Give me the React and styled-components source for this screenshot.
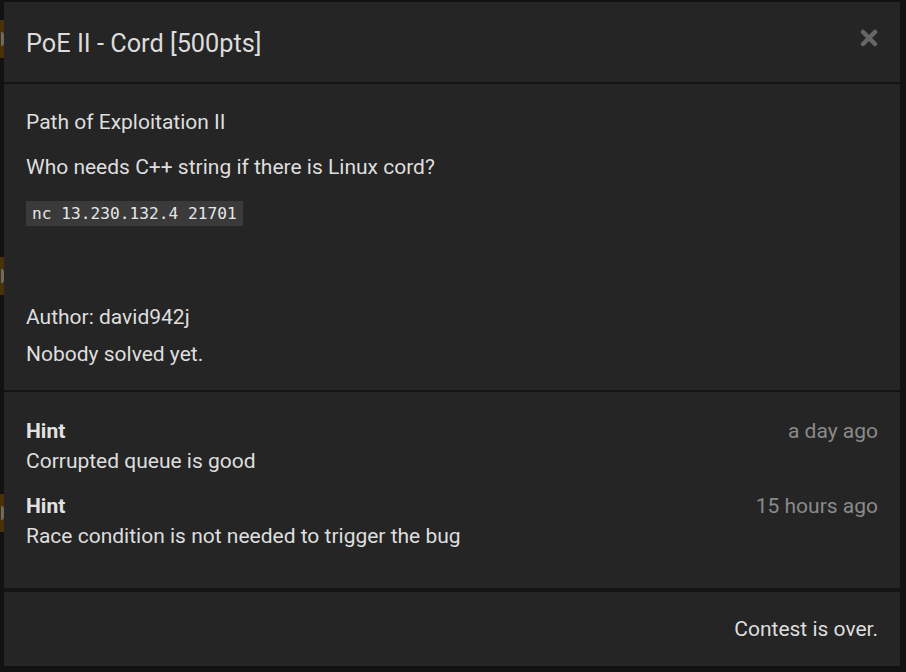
import React from "react";
import styled, { createGlobalStyle } from "styled-components";

const Global = createGlobalStyle`
  html, body { margin: 0; padding: 0; background: #121212; }
  body { font-family: Roboto, "Noto Sans", sans-serif; overflow: hidden; }
`;

const Page = styled.div`
  width: 906px;
  height: 672px;
  position: relative;
  overflow: hidden;
  background: #121212;
`;

const TileColumn = styled.div`
  display: flex;
  flex-direction: column;
  gap: 199px;
  padding-top: 20px;
  margin-left: -36px;
`;

const Tile = styled.div`
  width: 40px;
  height: 38px;
  background: #4a3208;
  position: relative;
  &::after {
    content: "";
    position: absolute;
    right: 0;
    top: 12px;
    width: 3px;
    height: 14px;
    background: #6e6a62;
    border-radius: 0 3px 3px 0;
  }
`;

const Modal = styled.div`
  position: absolute;
  left: 4px;
  top: 2px;
  width: 896px;
  display: flex;
  flex-direction: column;
  background: #141414;
  color: #dedede;
`;

const Section = styled.div`
  background: #252525;
  box-sizing: border-box;
  height: ${(p) => p.$h}px;
  margin-bottom: ${(p) => p.$gap || 0}px;
  padding: ${(p) => p.$pad};
`;

const Header = styled(Section)`
  display: flex;
  align-items: center;
  justify-content: space-between;
`;

const Title = styled.h4`
  margin: 0;
  padding-top: 4px;
  font-size: 25.3px;
  font-weight: 400;
  color: #dcdcdc;
  line-height: 30px;
`;

const Close = styled.button`
  background: none;
  border: 0;
  padding: 0;
  width: 18px;
  height: 18px;
  margin-top: -8px;
  cursor: pointer;
  display: flex;
`;

const Para = styled.p`
  margin: 0 0 ${(p) => p.$mb ?? 18}px;
  font-size: 21px;
  line-height: 27px;
  color: #dedede;
`;

const Code = styled.code`
  font-family: "DejaVu Sans Mono", monospace;
  font-size: 16.2px;
  background: #3a3a3a;
  color: #e6e6e6;
  padding: 3px 6px 3px 6px;
`;

const Spacer = styled.div`
  height: ${(p) => p.$h}px;
`;

const Hint = styled.div`
  margin-bottom: ${(p) => p.$mb}px;
`;

const HintHead = styled.div`
  display: flex;
  justify-content: space-between;
  align-items: baseline;
  line-height: 30px;
`;

const HintTitle = styled.strong`
  font-size: 21px;
  font-weight: 700;
  color: #e2e2e2;
`;

const Time = styled.span`
  font-size: 21px;
  color: #8a8a8a;
`;

const HintBody = styled.div`
  font-size: 21px;
  line-height: 30px;
  color: #dedede;
`;

const Footer = styled(Section)`
  display: flex;
  align-items: center;
  justify-content: flex-end;
  font-size: 21px;
  color: #dedede;
`;

export default function App() {
  return (
    <Page>
      <Global />
      <TileColumn>
        <Tile />
        <Tile />
        <Tile />
      </TileColumn>
      <Modal>
        <Header $h={80} $gap={2} $pad="0 22px">
          <Title>PoE II - Cord [500pts]</Title>
          <Close aria-label="close">
            <svg width="18" height="18" viewBox="0 0 18 18">
              <path d="M3 3 L15 15 M15 3 L3 15" stroke="#666" strokeWidth="4.5" strokeLinecap="round" />
            </svg>
          </Close>
        </Header>
        <Section $h={306} $gap={2} $pad="25px 22px">
          <Para>Path of Exploitation II</Para>
          <Para>Who needs C++ string if there is Linux cord?</Para>
          <Para $mb={0}><Code>nc 13.230.132.4 21701</Code></Para>
          <Spacer $h={77} />
          <Para $mb={10}>Author: david942j</Para>
          <Para $mb={0}>Nobody solved yet.</Para>
        </Section>
        <Section $h={196} $gap={4} $pad="24px 22px">
          <Hint $mb={15}>
            <HintHead>
              <HintTitle>Hint</HintTitle>
              <Time>a day ago</Time>
            </HintHead>
            <HintBody>Corrupted queue is good</HintBody>
          </Hint>
          <Hint $mb={0}>
            <HintHead>
              <HintTitle>Hint</HintTitle>
              <Time>15 hours ago</Time>
            </HintHead>
            <HintBody>Race condition is not needed to trigger the bug</HintBody>
          </Hint>
        </Section>
        <Footer $h={74} $pad="0 22px">Contest is over.</Footer>
      </Modal>
    </Page>
  );
}
